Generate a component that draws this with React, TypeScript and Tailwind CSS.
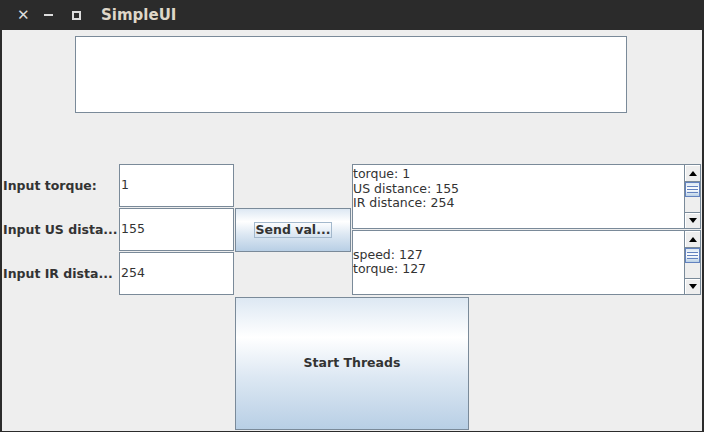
import React from 'react'

const dialog = { fontFamily: '"DejaVu Sans", Verdana, sans-serif' }

function Arrow({ up }: { up?: boolean }) {
  return (
    <svg width="8" height="5" viewBox="0 0 8 5">
      {up ? <polygon points="0,5 8,5 4,0" fill="#000" /> : <polygon points="0,0 8,0 4,5" fill="#000" />}
    </svg>
  )
}

function ScrollBar() {
  return (
    <div className="flex flex-col w-[16px] h-full bg-[#eeeeee] border-l border-[#7a8a99]">
      <div className="h-[17px] flex items-center justify-center border-b border-[#7a8a99] bg-[#eeeeee] shadow-[inset_1px_1px_0_#ffffff]">
        <Arrow up />
      </div>
      <div className="h-[15px] flex flex-col items-center justify-center gap-[2px] border border-[#6382bf] bg-gradient-to-b from-[#dde8f3] via-[#ffffff] to-[#b8cfe5]">
        <div className="w-[11px] h-px bg-[#6382bf]" />
        <div className="w-[11px] h-px bg-[#6382bf]" />
        <div className="w-[11px] h-px bg-[#6382bf]" />
      </div>
      <div className="flex-1 bg-[#eeeeee]" />
      <div className="h-[16px] flex items-center justify-center border-t border-[#7a8a99] bg-[#eeeeee] shadow-[inset_1px_1px_0_#ffffff]">
        <Arrow />
      </div>
    </div>
  )
}

function ScrollArea({ text }: { text: string }) {
  return (
    <div className="flex h-[65px] border border-[#7a8a99] bg-white">
      <div className="flex-1 whitespace-pre text-[12.5px] leading-[14.5px] text-[#333333] pt-[2px]" style={dialog}>
        {text}
      </div>
      <ScrollBar />
    </div>
  )
}

function Field({ value }: { value: string }) {
  return (
    <div className="h-[43px] mb-px flex items-center border border-[#7a8a99] bg-white pl-px text-[12.5px] text-[#333333]" style={dialog}>
      {value}
    </div>
  )
}

const metalGradient = 'bg-[linear-gradient(to_bottom,#dde8f3_0%,#ffffff_30%,#dde8f3_60%,#b8cfe5_100%)]'

export default function App() {
  return (
    <div className="w-[704px] h-[432px] flex flex-col bg-[#2b2b2b] overflow-hidden">
      {/* title bar */}
      <div className="h-[30px] flex items-center text-[#dcdcdc]">
        <span className="ml-[17px] w-[10px] text-[15px] font-bold leading-none" style={dialog}>✕</span>
        <div className="ml-[17px] w-[9px] h-[2px] bg-[#dcdcdc]" />
        <div className="ml-[19px] w-[9px] h-[9px] border-2 border-[#dcdcdc]" />
        <span className="ml-[20px] text-[15px] font-bold text-[#dfd7c9]" style={dialog}>SimpleUI</span>
      </div>

      {/* content */}
      <div className="h-[401px] mx-[2px] bg-[#eeeeee] flex flex-col">
        <div className="ml-[73px] mt-[6px] w-[552px] h-[77px] border border-[#7a8a99] bg-white" />

        <div className="mt-[51px] flex">
          <div className="w-[117px] flex flex-col pl-px text-[12.5px] font-bold text-[#333333] whitespace-nowrap" style={dialog}>
            <div className="h-[44px] flex items-center">Input torque:</div>
            <div className="h-[44px] flex items-center">Input US dista...</div>
            <div className="h-[44px] flex items-center">Input IR dista...</div>
          </div>
          <div className="w-[115px] flex flex-col">
            <Field value="1" />
            <Field value="155" />
            <Field value="254" />
          </div>
          <div className="ml-px w-[116px] flex flex-col">
            <div className="h-[44px]" />
            <div className={`h-[44px] flex items-center justify-center border border-[#7a8a99] ${metalGradient}`}>
              <span className="px-[1px] border border-[#a3b8cc] text-[12.5px] font-bold leading-[14px] text-[#333333]" style={dialog}>
                Send val...
              </span>
            </div>
          </div>
          <div className="ml-px w-[349px] flex flex-col gap-px">
            <ScrollArea text={'torque: 1\nUS distance: 155\nIR distance: 254'} />
            <ScrollArea text={'\nspeed: 127\ntorque: 127'} />
          </div>
        </div>

        <div className={`ml-[233px] mt-px w-[234px] h-[133px] flex items-center justify-center border border-[#7a8a99] ${metalGradient}`}>
          <span className="text-[12.5px] font-bold text-[#333333]" style={dialog}>Start Threads</span>
        </div>
      </div>
    </div>
  )
}
